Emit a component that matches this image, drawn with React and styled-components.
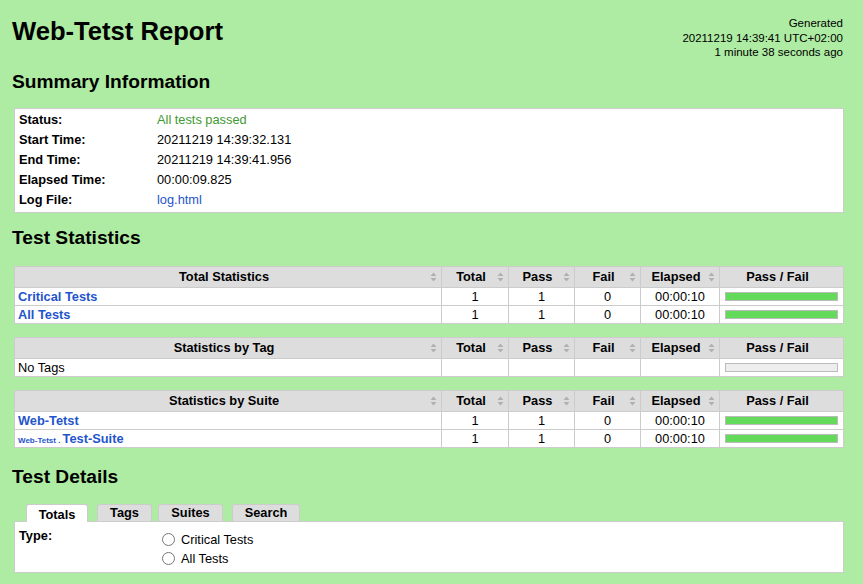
import React from "react";
import styled, { createGlobalStyle } from "styled-components";

const Global = createGlobalStyle`
  html, body { margin: 0; padding: 0; }
  body {
    background: #aeeca3;
    color: #000;
    font-family: "Liberation Sans", Arial, Helvetica, sans-serif;
    font-size: 12.8px;
  }
`;

const Page = styled.div`
  padding: 12px 19px 12px 14px;
`;

const Header = styled.header`
  display: flex;
  justify-content: space-between;
  align-items: flex-start;
`;

const Title = styled.h1`
  margin: 4px 0 0 -2px;
  font-size: 25.6px;
  line-height: 30px;
  font-weight: bold;
`;

const Generated = styled.div`
  text-align: right;
  font-size: 11.5px;
  line-height: 14.5px;
  white-space: nowrap;
  margin-top: 4px;
  margin-right: 1px;
`;

const H2 = styled.h2`
  margin: ${(p) => p.$mt}px 0 ${(p) => p.$mb}px -2px;
  font-size: 19.2px;
  line-height: 22px;
  font-weight: bold;
`;

const SummaryTable = styled.table`
  width: 100%;
  border-collapse: separate;
  border-spacing: 0;
  padding: 1px 0 2px;
  background: #fff;
  border: 1px solid #ccc;
`;

const SumTh = styled.th`
  text-align: left;
  font-weight: bold;
  width: 138px;
  padding: 0 0 0 4px;
  height: 20px;
  vertical-align: middle;
`;

const SumTd = styled.td`
  padding: 0;
  height: 20px;
  vertical-align: middle;
  color: ${(p) => p.$color || "#000"};
`;

const Link = styled.a`
  color: #1f55cc;
  text-decoration: none;
  font-weight: ${(p) => (p.$bold ? "bold" : "normal")};
`;

const SmallLink = styled.a`
  color: #1f55cc;
  text-decoration: none;
  font-weight: bold;
  font-size: 8px;
  white-space: pre;
`;

const StatTable = styled.table`
  width: 100%;
  table-layout: fixed;
  border-collapse: collapse;
  background: #fff;
  border: 1px solid #ccc;
  margin-bottom: 13px;
`;

const StatTh = styled.th`
  position: relative;
  background: #ddd;
  border: 1px solid #ccc;
  height: 20px;
  padding: 0 12px 0 4px;
  font-weight: bold;
  text-align: center;
  vertical-align: middle;
`;

const SortIcon = styled.svg`
  position: absolute;
  right: 4px;
  top: 50%;
  margin-top: -5px;
`;

const StatTd = styled.td`
  border: 1px solid #ccc;
  height: 17px;
  padding: 0 3px;
  text-align: ${(p) => (p.$left ? "left" : "center")};
  vertical-align: middle;
  white-space: nowrap;
`;

const Graph = styled.div`
  height: 7px;
  margin: 0 2px;
  border: 1px solid #bbb;
  background: ${(p) => (p.$empty ? "#eee" : "#64da5a")};
`;

const Tabs = styled.ul`
  list-style: none;
  margin: 0;
  padding: 0;
  display: flex;
  align-items: flex-end;
`;

const Tab = styled.li`
  width: ${(p) => p.$w}px;
  margin-left: ${(p) => p.$ml}px;
  height: ${(p) => (p.$active ? 18 : 17)}px;
  box-sizing: border-box;
  background: ${(p) => (p.$active ? "#fff" : "#ddd")};
  border: 1px solid #ccc;
  border-bottom: none;
  border-radius: 3px 3px 0 0;
  text-align: center;
  font-weight: bold;
  line-height: ${(p) => (p.$active ? 19 : 15)}px;
  margin-bottom: ${(p) => (p.$active ? -1 : 0)}px;
  position: relative;
`;

const DetailsBox = styled.div`
  background: #fff;
  border: 1px solid #ccc;
  height: 52px;
  display: grid;
  grid-template-columns: 143px 1fr;
  padding: 8px 0 0 4px;
  box-sizing: border-box;
`;

const TypeLabel = styled.div`
  font-weight: bold;
  line-height: 18px;
  margin-top: -3px;
`;

const Radios = styled.div`
  display: flex;
  flex-direction: column;
`;

const RadioRow = styled.label`
  display: flex;
  align-items: center;
  height: 19px;
  line-height: 19px;
`;

const Radio = styled.input`
  margin: 0 6px 0 0;
  width: 13px;
  height: 13px;
`;

const Sort = () => (
  <SortIcon width="7" height="10" viewBox="0 0 7 10">
    <path d="M3.5 0.5 L6.5 4 L0.5 4 Z" fill="#b0b0b0" />
    <path d="M3.5 9.5 L6.5 6 L0.5 6 Z" fill="#b0b0b0" />
  </SortIcon>
);

const Cols = () => (
  <colgroup>
    <col />
    <col style={{ width: 67 }} />
    <col style={{ width: 66 }} />
    <col style={{ width: 66 }} />
    <col style={{ width: 79 }} />
    <col style={{ width: 124 }} />
  </colgroup>
);

const StatHead = ({ title }) => (
  <thead>
    <tr>
      <StatTh>{title}<Sort /></StatTh>
      <StatTh>Total<Sort /></StatTh>
      <StatTh>Pass<Sort /></StatTh>
      <StatTh>Fail<Sort /></StatTh>
      <StatTh>Elapsed<Sort /></StatTh>
      <StatTh>Pass / Fail</StatTh>
    </tr>
  </thead>
);

const StatRow = ({ name }) => (
  <tr>
    <StatTd $left>{name}</StatTd>
    <StatTd>1</StatTd>
    <StatTd>1</StatTd>
    <StatTd>0</StatTd>
    <StatTd>00:00:10</StatTd>
    <StatTd><Graph /></StatTd>
  </tr>
);

export default function App() {
  return (
    <Page>
      <Global />
      <Header>
        <Title>Web-Tetst Report</Title>
        <Generated>
          Generated<br />
          20211219 14:39:41 UTC+02:00<br />
          1 minute 38 seconds ago
        </Generated>
      </Header>

      <H2 $mt={11} $mb={15}>Summary Information</H2>
      <SummaryTable>
        <tbody>
          <tr><SumTh>Status:</SumTh><SumTd $color="#3f9a33">All tests passed</SumTd></tr>
          <tr><SumTh>Start Time:</SumTh><SumTd>20211219 14:39:32.131</SumTd></tr>
          <tr><SumTh>End Time:</SumTh><SumTd>20211219 14:39:41.956</SumTd></tr>
          <tr><SumTh>Elapsed Time:</SumTh><SumTd>00:00:09.825</SumTd></tr>
          <tr><SumTh>Log File:</SumTh><SumTd><Link href="#">log.html</Link></SumTd></tr>
        </tbody>
      </SummaryTable>

      <H2 $mt={14} $mb={17}>Test Statistics</H2>
      <StatTable>
        <Cols />
        <StatHead title="Total Statistics" />
        <tbody>
          <StatRow name={<Link $bold href="#">Critical Tests</Link>} />
          <StatRow name={<Link $bold href="#">All Tests</Link>} />
        </tbody>
      </StatTable>

      <StatTable>
        <Cols />
        <StatHead title="Statistics by Tag" />
        <tbody>
          <tr>
            <StatTd $left>No Tags</StatTd>
            <StatTd />
            <StatTd />
            <StatTd />
            <StatTd />
            <StatTd><Graph $empty /></StatTd>
          </tr>
        </tbody>
      </StatTable>

      <StatTable>
        <Cols />
        <StatHead title="Statistics by Suite" />
        <tbody>
          <StatRow name={<Link $bold href="#">Web-Tetst</Link>} />
          <StatRow
            name={
              <>
                <SmallLink href="#">Web-Tetst . </SmallLink>
                <Link $bold href="#">Test-Suite</Link>
              </>
            }
          />
        </tbody>
      </StatTable>

      <H2 $mt={18} $mb={16}>Test Details</H2>
      <Tabs>
        <Tab $active $w={62} $ml={12}>Totals</Tab>
        <Tab $w={55} $ml={9}>Tags</Tab>
        <Tab $w={65} $ml={6}>Suites</Tab>
        <Tab $w={68} $ml={9}>Search</Tab>
      </Tabs>
      <DetailsBox>
        <TypeLabel>Type:</TypeLabel>
        <Radios>
          <RadioRow><Radio type="radio" name="type" />Critical Tests</RadioRow>
          <RadioRow><Radio type="radio" name="type" />All Tests</RadioRow>
        </Radios>
      </DetailsBox>
    </Page>
  );
}
